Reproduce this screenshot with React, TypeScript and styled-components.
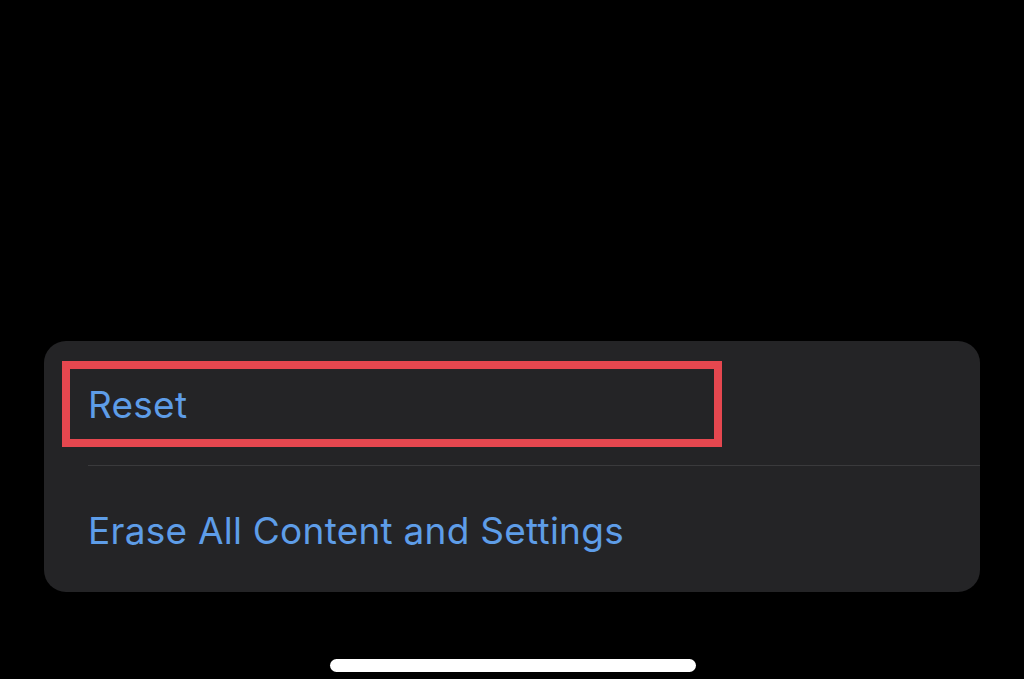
import { FC } from 'react';
import styled, { createGlobalStyle } from 'styled-components';

const GlobalStyle = createGlobalStyle`
  html, body {
    margin: 0;
    padding: 0;
    background: #000;
  }
  body {
    width: 1024px;
    height: 679px;
    overflow: hidden;
    font-family: Inter, "Liberation Sans", sans-serif;
  }
`;

const Screen = styled.div`
  width: 1024px;
  height: 679px;
  display: flex;
  flex-direction: column;
  align-items: flex-start;
  padding-left: 44px;
  box-sizing: border-box;
  background: #000;
`;

const Card = styled.div`
  margin-top: 341px;
  width: 936px;
  background: #242426;
  border-radius: 22px;
  display: flex;
  flex-direction: column;
  position: relative;
`;

const Row = styled.div<{ $divider?: boolean; $height: number }>`
  height: ${p => p.$height}px;
  display: flex;
  align-items: center;
  margin-left: 44px;
  padding-top: 2px;
  box-sizing: border-box;
  border-bottom: ${p => p.$divider ? '1px solid #3a3a3c' : 'none'};
`;

const RowLabel = styled.span`
  color: #5e9de8;
  font-size: 37px;
  font-weight: 400;
  letter-spacing: 0.25px;
`;

// red annotation frame drawn over the first row
const Highlight = styled.div`
  position: absolute;
  left: 18px;
  top: 20px;
  width: 660px;
  height: 86px;
  border: 8px solid #e5474f;
  box-sizing: border-box;
`;

const HomeIndicator = styled.div`
  margin-top: 67px;
  margin-left: 286px;
  width: 366px;
  height: 13px;
  border-radius: 7px;
  background: #fff;
`;

const App: FC = () => (
  <Screen>
    <GlobalStyle />
    <Card>
      <Highlight />
      <Row $divider $height={125}>
        <RowLabel>Reset</RowLabel>
      </Row>
      <Row $height={126}>
        <RowLabel>Erase All Content and Settings</RowLabel>
      </Row>
    </Card>
    <HomeIndicator />
  </Screen>
);

export default App;
